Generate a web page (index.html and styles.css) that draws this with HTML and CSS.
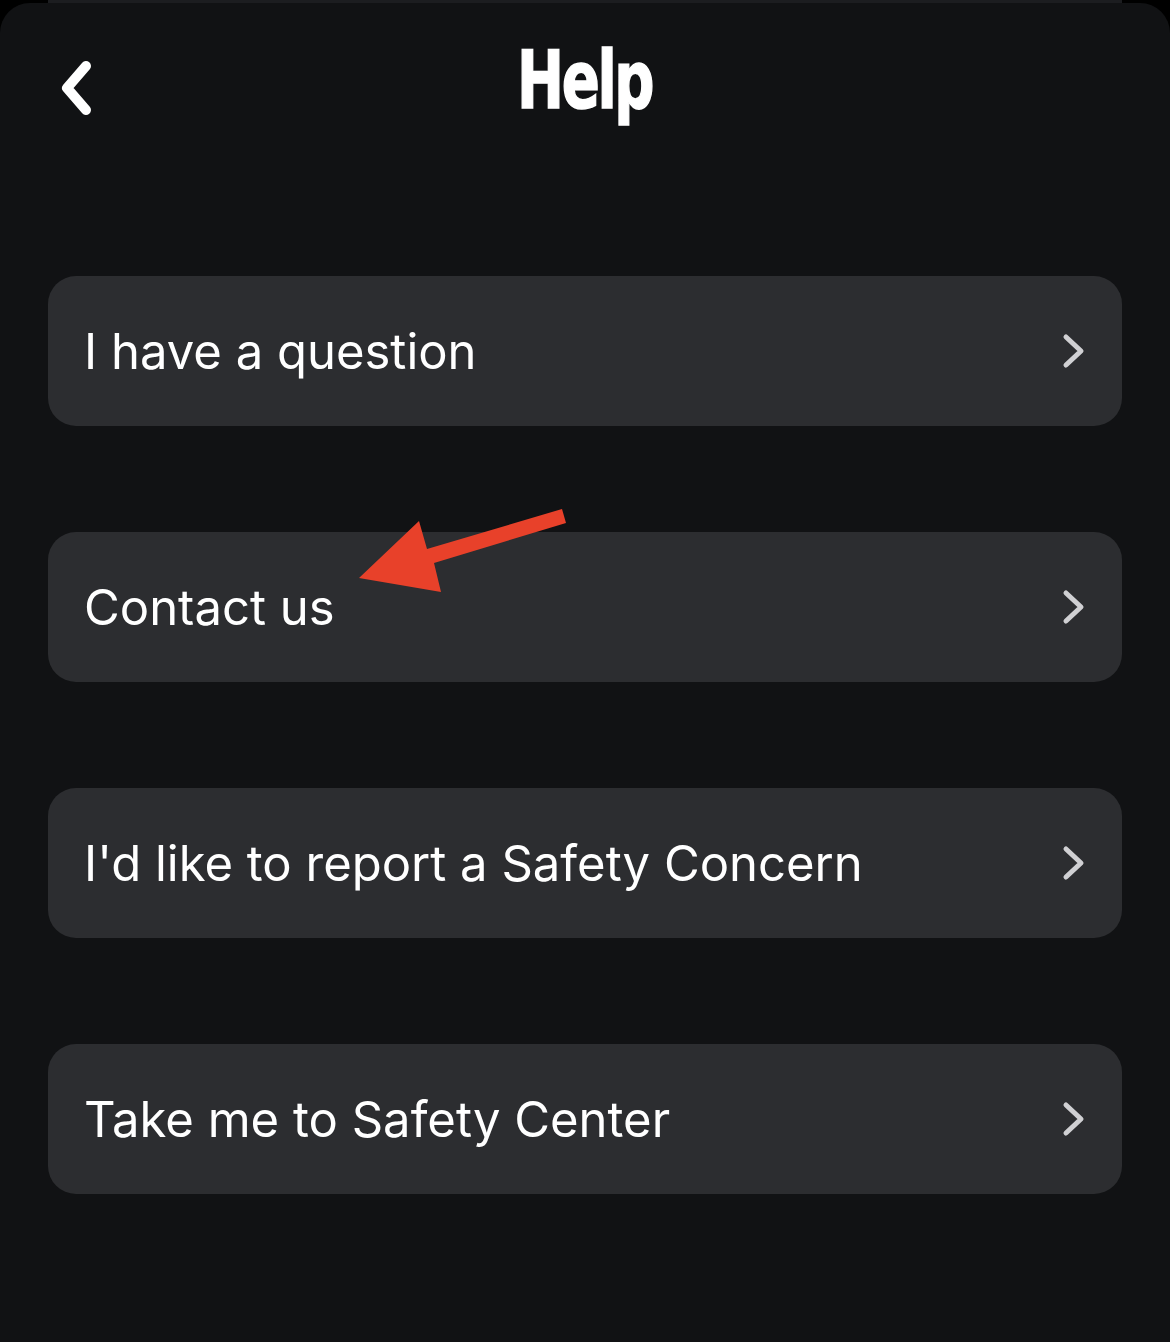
FILE: index.html
```html
<!DOCTYPE html>
<html lang="en">
  <head>
    <meta charset="UTF-8" />
    <meta name="viewport" content="width=device-width, initial-scale=1.0"/>
    <title>Help</title>
    <link rel="stylesheet" href="styles.css">
  </head>
  <body>

    <div class="sheet">
      <!-- Шапка -->
      <div class="header">
        <button class="back-btn" aria-label="Back">
          <svg width="40" height="56" viewBox="0 0 40 56">
            <path d="M28 6 L9 28 L28 50" fill="none" stroke="#fff" stroke-width="10" stroke-linecap="round" stroke-linejoin="round"/>
          </svg>
        </button>
        <h1 class="title">Help</h1>
      </div>

      <!-- Список пунктов -->
      <div class="menu">
        <div class="menu-item">
          <span>I have a question</span>
          <svg class="chev" width="26" height="36" viewBox="0 0 26 36"><path d="M5 4 L20 18 L5 32" /></svg>
        </div>
        <div class="menu-item">
          <span>Contact us</span>
          <svg class="chev" width="26" height="36" viewBox="0 0 26 36"><path d="M5 4 L20 18 L5 32" /></svg>
        </div>
        <div class="menu-item">
          <span>I'd like to report a Safety Concern</span>
          <svg class="chev" width="26" height="36" viewBox="0 0 26 36"><path d="M5 4 L20 18 L5 32" /></svg>
        </div>
        <div class="menu-item">
          <span>Take me to Safety Center</span>
          <svg class="chev" width="26" height="36" viewBox="0 0 26 36"><path d="M5 4 L20 18 L5 32" /></svg>
        </div>
      </div>

      <!-- Красная стрелка поверх -->
      <svg class="annotation" width="1170" height="700" viewBox="0 0 1170 700">
        <polygon points="562,509 566,523 434,563 441,592 359,578 419,521 427,549" fill="#e8412a"/>
      </svg>
    </div>

  </body>
</html>
```

FILE: styles.css
```css
body {
  margin: 0;
  background-color: #000;
  font-family: "Inter", "Noto Sans", sans-serif;
  color: white;
}

.sheet {
  position: relative;
  margin-top: 3px;
  min-height: 1339px;
  background-color: #111214;
  border-radius: 30px 30px 0 0;
}

.sheet::before {
  content: "";
  position: absolute;
  top: -3px;
  left: 48px;
  right: 48px;
  height: 3px;
  background-color: #1c1d20;
}

.header {
  position: relative;
  height: 160px;
  display: flex;
  justify-content: center;
}

.back-btn {
  position: absolute;
  left: 58px;
  top: 57px;
  padding: 0;
  border: none;
  background: none;
  display: flex;
}

.title {
  margin: 0;
  margin-top: 28px;
  font-family: "DejaVu Sans", sans-serif;
  font-stretch: condensed;
  font-weight: bold;
  font-size: 80px;
  line-height: 100px;
  letter-spacing: -3px;
  -webkit-text-stroke: 1.5px #fff;
  transform: scaleX(0.78);
}

.menu {
  display: flex;
  flex-direction: column;
  gap: 106px;
  padding: 113px 48px 0;
}

.menu-item {
  height: 150px;
  display: flex;
  align-items: center;
  justify-content: space-between;
  padding: 0 35px 0 36px;
  background-color: #2c2d30;
  border-radius: 28px;
  font-size: 49px;
  font-weight: 400;
  color: #fff;
}

.chev path {
  fill: none;
  stroke: #d0d0d3;
  stroke-width: 5;
  stroke-linecap: round;
  stroke-linejoin: round;
}

.annotation {
  position: absolute;
  top: -3px;
  left: 0;
  pointer-events: none;
}
```
